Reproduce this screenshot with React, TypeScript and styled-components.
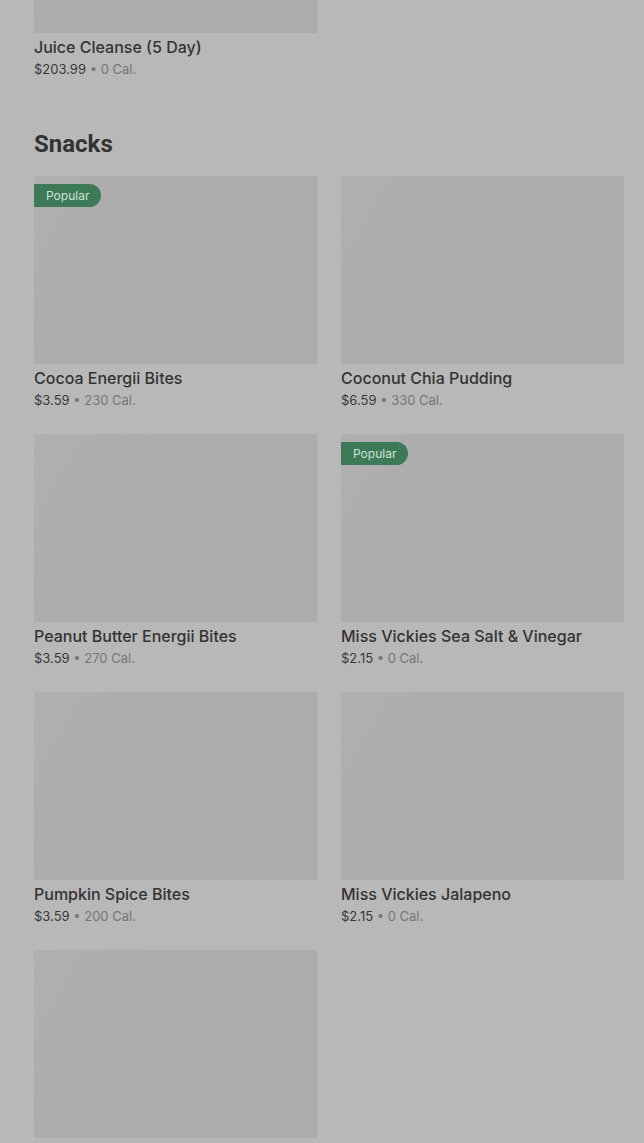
import * as React from 'react';
import styled, { createGlobalStyle } from 'styled-components';

type Item = { name: string; price: string; cal: number; popular?: boolean };

const snacks: Item[] = [
  { name: 'Cocoa Energii Bites', price: '$3.59', cal: 230, popular: true },
  { name: 'Coconut Chia Pudding', price: '$6.59', cal: 330 },
  { name: 'Peanut Butter Energii Bites', price: '$3.59', cal: 270 },
  { name: 'Miss Vickies Sea Salt & Vinegar', price: '$2.15', cal: 0, popular: true },
  { name: 'Pumpkin Spice Bites', price: '$3.59', cal: 200 },
  { name: 'Miss Vickies Jalapeno', price: '$2.15', cal: 0 },
  { name: 'Sea Salt Chips', price: '$2.15', cal: 0 },
];

const ItemCard = ({ item }: { item: Item }) => (
  <Card>
    <Photo>{item.popular && <Badge>Popular</Badge>}</Photo>
    <Name>{item.name}</Name>
    <Meta>
      <Price>{item.price}</Price> • {item.cal} Cal.
    </Meta>
  </Card>
);

export default function App() {
  return (
    <>
      <GlobalStyle />
      <Page>
        <Section $first>
          <Grid>
            <ItemCard item={{ name: 'Juice Cleanse (5 Day)', price: '$203.99', cal: 0 }} />
          </Grid>
        </Section>
        <Section>
          <Heading>Snacks</Heading>
          <Grid>
            {snacks.map((s) => (
              <ItemCard key={s.name} item={s} />
            ))}
          </Grid>
        </Section>
      </Page>
    </>
  );
}

const GlobalStyle = createGlobalStyle`
  html, body {
    margin: 0;
    height: 1143px;
    overflow: hidden;
    background: #b8b8b8;
  }
  body {
    font-family: Inter, Roboto, "Liberation Sans", sans-serif;
    color: #333333;
  }
`;

const Page = styled.div`
  padding: 0 20px 0 34px;
  background: #b8b8b8;
`;

const Section = styled.section<{ $first?: boolean }>`
  margin-top: ${(p) => (p.$first ? '-155px' : '49px')};
`;

const Heading = styled.h2`
  margin: 0 0 16px;
  font-family: Roboto, "Liberation Sans", sans-serif;
  font-size: 24px;
  line-height: 32px;
  font-weight: 700;
  color: #333333;
`;

const Grid = styled.div`
  display: grid;
  grid-template-columns: 283px 283px;
  column-gap: 24px;
  row-gap: 24px;
`;

const Card = styled.div`
  display: flex;
  flex-direction: column;
`;

const Photo = styled.div`
  position: relative;
  height: 188px;
  background: linear-gradient(120deg, #b0b0b0 0%, #acacac 30%, #acacac 100%);
`;

const Badge = styled.span`
  position: absolute;
  top: 8px;
  left: 0;
  height: 23px;
  padding: 0 12px;
  display: flex;
  align-items: center;
  background: #3d7a58;
  color: #cfe2d6;
  font-size: 12px;
  border-radius: 0 12px 12px 0;
`;

const Name = styled.div`
  margin-top: 4px;
  font-size: 16px;
  line-height: 20px;
  font-weight: 500;
  color: #333333;
`;

const Meta = styled.div`
  margin-top: 3px;
  font-size: 13px;
  line-height: 19px;
  color: #777777;
`;

const Price = styled.span`
  color: #3a3a3a;
`;
